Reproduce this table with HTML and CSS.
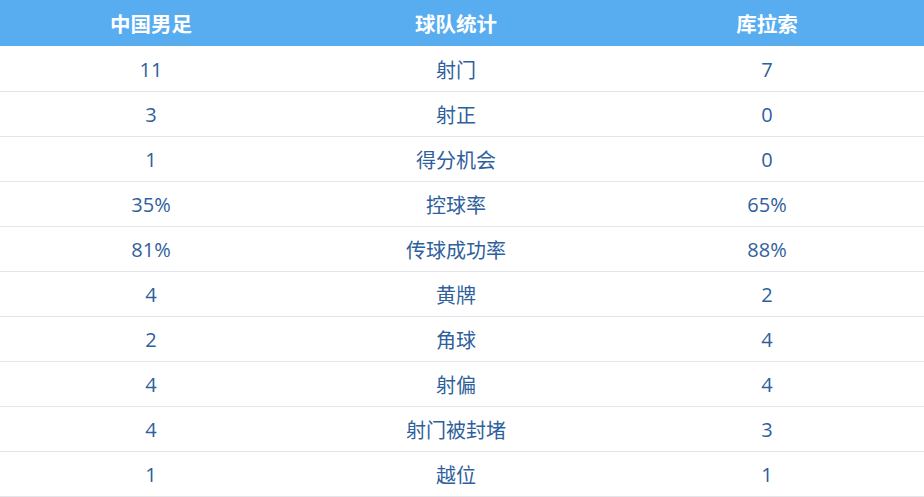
FILE: index.html
```html
<!DOCTYPE html>
<html lang="zh-CN">
<head>
<meta charset="utf-8">
<title>球队统计</title>
<link rel="stylesheet" href="styles.css">
</head>
<body>
<div class="stats">
  <div class="row head"><div>中国男足</div><div>球队统计</div><div>库拉索</div></div>
  <div class="row"><div>11</div><div>射门</div><div>7</div></div>
  <div class="row"><div>3</div><div>射正</div><div>0</div></div>
  <div class="row"><div>1</div><div>得分机会</div><div>0</div></div>
  <div class="row"><div>35%</div><div>控球率</div><div>65%</div></div>
  <div class="row"><div>81%</div><div>传球成功率</div><div>88%</div></div>
  <div class="row"><div>4</div><div>黄牌</div><div>2</div></div>
  <div class="row"><div>2</div><div>角球</div><div>4</div></div>
  <div class="row"><div>4</div><div>射偏</div><div>4</div></div>
  <div class="row"><div>4</div><div>射门被封堵</div><div>3</div></div>
  <div class="row"><div>1</div><div>越位</div><div>1</div></div>
</div>
</body>
</html>
```
FILE: styles.css
```css
html, body {
  margin: 0;
  padding: 0;
  background: #ffffff;
}
.stats {
  width: 924px;
  font-family: "Open Sans", "Noto Sans CJK SC", sans-serif;
  font-size: 20px;
  color: #2f5f9c;
}
.row {
  display: grid;
  grid-template-columns: 302px 308px 314px;
  height: 45px;
  box-sizing: border-box;
  border-bottom: 1px solid #e2e6ea;
  align-items: center;
  text-align: center;
}
.row.head {
  height: 46px;
  margin-bottom: 1px;
  background: #58adf1;
  color: #ffffff;
  font-weight: bold;
  border-bottom: none;
  font-family: "Noto Sans CJK SC", sans-serif;
  font-size: 20.5px;
}
```
